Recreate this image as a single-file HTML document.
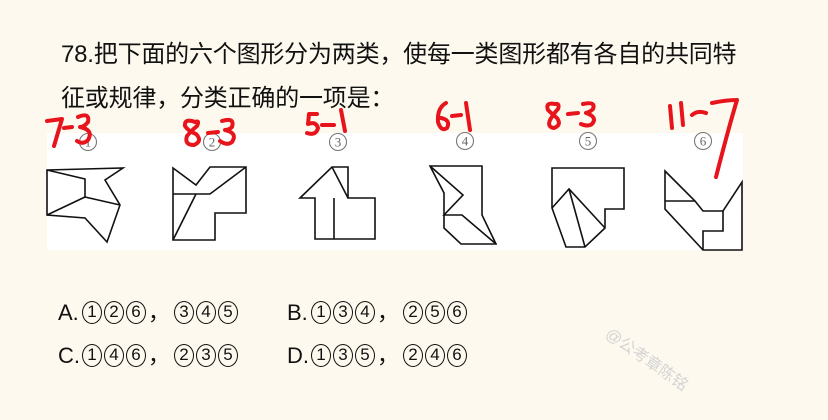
<!DOCTYPE html>
<html><head><meta charset="utf-8"><style>
body{margin:0;width:828px;height:420px;background:#fdf9ee;position:relative;overflow:hidden;font-family:"Liberation Sans","Noto Sans CJK SC",sans-serif;color:#111}
.t{position:absolute;left:61px;font-size:24px;white-space:nowrap;letter-spacing:-0.2px}
.o{position:absolute;font-size:22px;white-space:nowrap;height:26px;line-height:26px}
.o span,.o i{display:inline-block;vertical-align:top}
.o span{width:24px}
.o i{font-style:normal;width:20px;height:23px;margin-top:1px;border:1.6px solid #111;border-radius:50%;font-size:17px;line-height:20px;text-align:center;margin-right:2px;box-sizing:border-box}
.o b{font-weight:normal;display:inline-block;width:26px}
.panel{position:absolute;left:47px;top:133px;width:696px;height:117px;background:#fff}
svg{position:absolute;left:0;top:0}
</style></head><body>
<div class="t" style="top:34px">78.把下面的六个图形分为两类，使每一类图形都有各自的共同特</div>
<div class="t" style="top:78px">征或规律，分类正确的一项是：</div>
<div class="panel"></div>
<svg width="828" height="420" viewBox="0 0 828 420">
<g fill="none" stroke="#111" stroke-width="1.6" stroke-linejoin="miter">
<polygon points="47,170 123,168 105,180 120,205 107,242 85,218 47,215"/>
<polyline points="47,170 85,179 85,197 120,205"/><line x1="85" y1="197" x2="47" y2="215"/>
<polygon points="173,168 196,185 210,167 246,167 246,213 215,213 215,240 173,240"/>
<polyline points="173,194 210,194 246,167"/><line x1="196" y1="194" x2="173" y2="240"/>
<polygon points="300,198 332,167 348,167 348,198 375,198 375,239 315,239 315,198"/>
<line x1="334" y1="198" x2="334" y2="239"/><line x1="332" y1="167" x2="348" y2="198"/>
<polygon points="430,166 482,166 482,215 496,244 461,244 444,228 444,193"/>
<polyline points="430,166 463,195 444,215 462,215 496,244"/>
<polygon points="552,168 624,168 624,209 605,209 605,228 585,247 566,247 552,208"/>
<polyline points="552,208 569,189 605,228"/><line x1="569" y1="189" x2="585" y2="247"/>
<polygon points="665,171 695,201 703,211 723,211 742,182 742,250 703,250 665,209"/>
<polyline points="723,211 723,231 703,231 703,250"/><line x1="665" y1="201" x2="695" y2="201"/>
</g>
<g fill="none" stroke="#777" stroke-width="1.1">
<circle cx="88" cy="142" r="8.5"/><circle cx="212" cy="142" r="8.5"/><circle cx="338" cy="142" r="8.5"/>
<circle cx="465" cy="141" r="8.5"/><circle cx="588" cy="141" r="8.5"/><circle cx="703" cy="141" r="8.5"/>
</g>
<g font-family="Liberation Serif,serif" font-size="13" fill="#666" text-anchor="middle">
<text x="88" y="146.5">1</text><text x="212" y="146.5">2</text><text x="338" y="146.5">3</text>
<text x="465" y="145.5">4</text><text x="588" y="145.5">5</text><text x="703" y="145.5">6</text>
</g>
<g fill="none" stroke="#e8141c" stroke-width="4" stroke-linecap="round" stroke-linejoin="round">
<path d="M47,121 L62,119 L54,146"/><path d="M64,128 L72,127"/><path d="M78,117 Q90,112 88,122 Q84,127 80,127 Q94,130 88,140 Q83,145 77,141"/>
<path d="M195,122 Q184,118 185,126 Q188,131 196,134 Q203,141 194,145 Q184,145 187,136 Q192,130 197,126 Q200,120 195,122"/><path d="M208,133 L218,132"/><path d="M222,121 Q235,117 232,127 Q229,130 225,130 Q238,133 232,142 Q227,146 220,141"/>
<path d="M317,114 L309,114 L308,124 Q316,121 318,128 Q316,136 307,133"/><path d="M322,125 L334,125"/><path d="M341,110 L345,131"/>
<path d="M446,103 Q437,108 438,122 Q441,132 447,128 Q451,120 441,118"/><path d="M452,116 L461,115"/><path d="M466,103 L470,130"/>
<path d="M555,104 Q545,102 548,110 Q552,114 557,118 Q562,125 554,128 Q547,127 550,120 Q554,113 558,109 Q560,103 555,104"/><path d="M568,114 L578,113"/><path d="M583,104 Q596,101 593,109 Q590,112 586,113 Q598,117 592,124 Q588,127 581,124"/>
<path d="M670,106 L672,128"/><path d="M681,103 L683,125"/><path d="M692,115 Q698,110 706,113"/><path d="M712,103 Q726,100 737,100 Q728,130 716,177"/>
</g>
<text x="600" y="360" transform="rotate(35 640 355)" font-size="16" fill="#d4d4d4" font-family="Liberation Sans,Noto Sans CJK SC,sans-serif">@公考章陈铭</text>
</svg>
<div class="o" style="left:58px;top:300px"><span>A.</span><i>1</i><i>2</i><i>6</i><b>，</b><i>3</i><i>4</i><i>5</i></div>
<div class="o" style="left:287px;top:300px"><span>B.</span><i>1</i><i>3</i><i>4</i><b>，</b><i>2</i><i>5</i><i>6</i></div>
<div class="o" style="left:58px;top:343px"><span>C.</span><i>1</i><i>4</i><i>6</i><b>，</b><i>2</i><i>3</i><i>5</i></div>
<div class="o" style="left:287px;top:343px"><span>D.</span><i>1</i><i>3</i><i>5</i><b>，</b><i>2</i><i>4</i><i>6</i></div>
</body></html>
